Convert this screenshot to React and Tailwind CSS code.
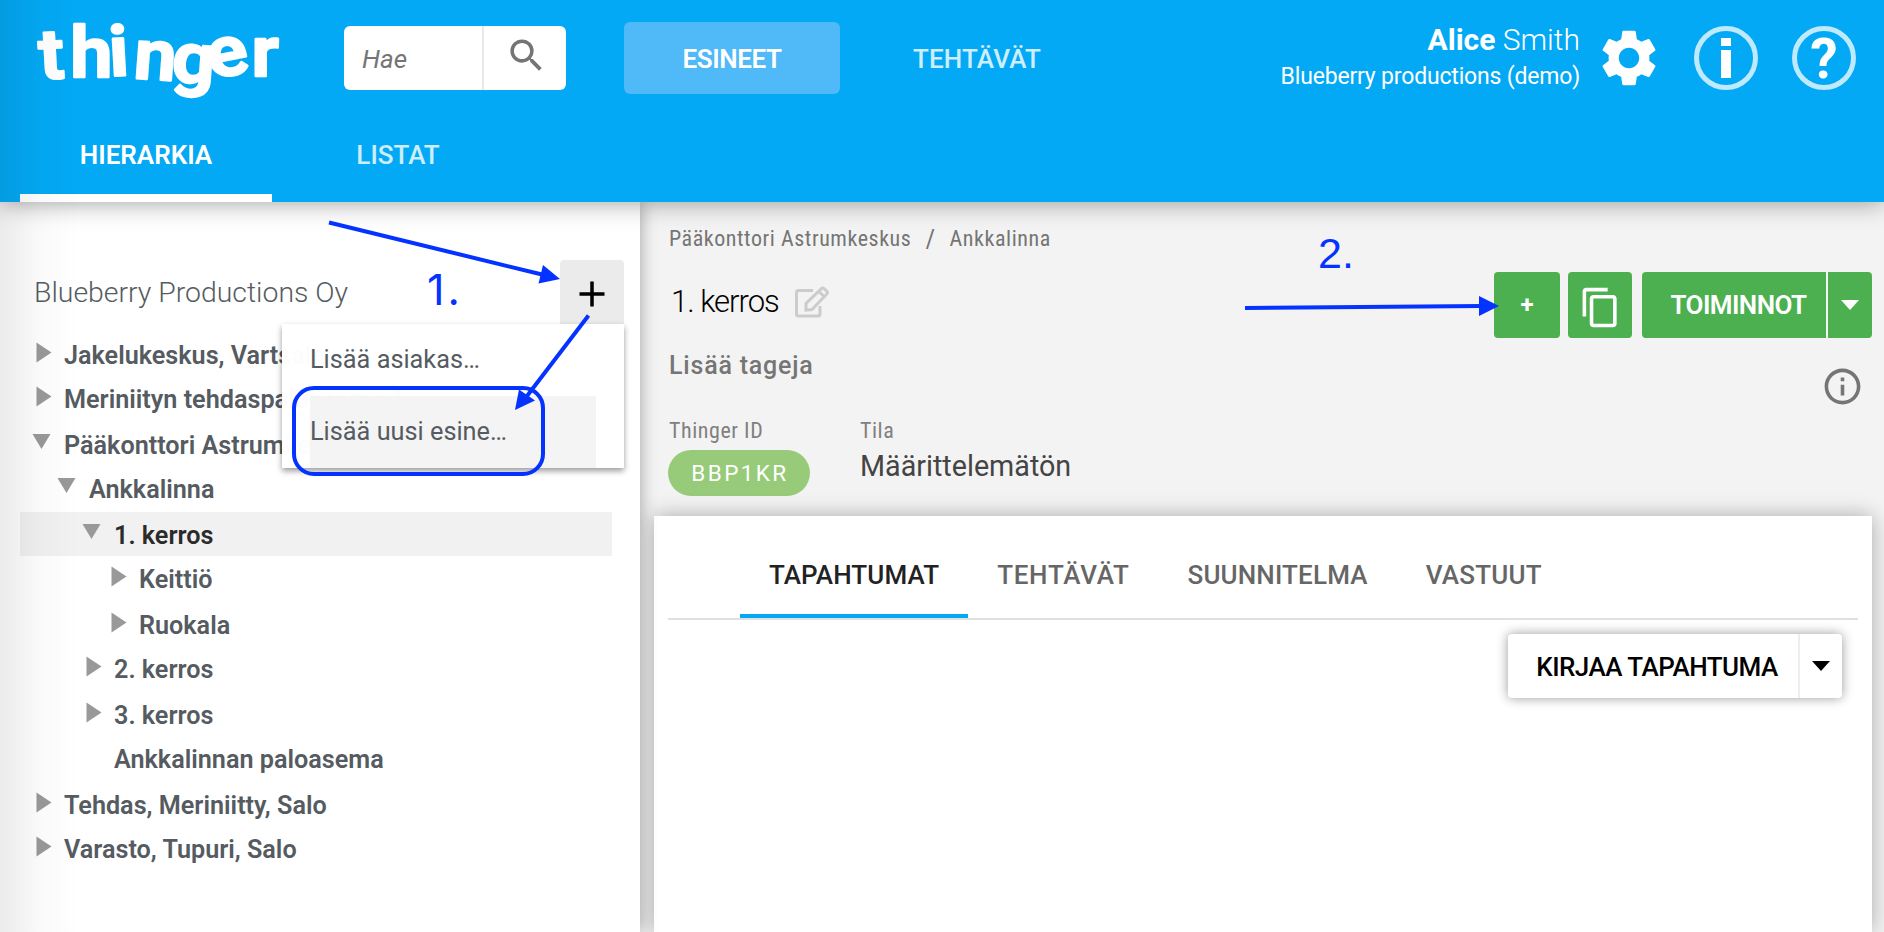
import React, { useState } from "react";
import { MdSearch, MdSettings, MdContentCopy, MdInfoOutline } from "react-icons/md";

const TREE = [
  { label: "Jakelukeskus, Vartsala", level: 0, state: "closed" },
  { label: "Meriniityn tehdaspaloasema 1", level: 0, state: "closed" },
  { label: "Pääkonttori Astrumkeskus", level: 0, state: "open" },
  { label: "Ankkalinna", level: 1, state: "open" },
  { label: "1. kerros", level: 2, state: "open" },
  { label: "Keittiö", level: 3, state: "closed" },
  { label: "Ruokala", level: 3, state: "closed" },
  { label: "2. kerros", level: 2, state: "closed" },
  { label: "3. kerros", level: 2, state: "closed" },
  { label: "Ankkalinnan paloasema", level: 2, state: "leaf" },
  { label: "Tehdas, Meriniitty, Salo", level: 0, state: "closed" },
  { label: "Varasto, Tupuri, Salo", level: 0, state: "closed" },
];

const INDENT = ["pl-[12px]", "pl-[37px]", "pl-[62px]", "pl-[87px]"];

const TABS = [
  { label: "TAPAHTUMAT", spacing: "tracking-[0.100px]" },
  { label: "TEHTÄVÄT", spacing: "tracking-[0.700px]" },
  { label: "SUUNNITELMA", spacing: "tracking-[0.150px]" },
  { label: "VASTUUT", spacing: "tracking-[0.250px]" },
];

function Logo() {
  return (
    <svg width="260" height="110" viewBox="30 0 260 110" className="block shrink-0">
      <text
        transform="scale(1.08 1)"
        x="37 65 102 123 158 196 233"
        y="79 77 76 78 81 79 76"
        rotate="-3 0 -3 4 4 -12 0"
        fontFamily="Roboto, sans-serif"
        fontWeight="600"
        fontSize="70"
        fill="#fff"
        stroke="#fff"
        strokeWidth="2.500"
        strokeLinejoin="round"
      >
        thinger
      </text>
    </svg>
  );
}

function Caret() {
  return (
    <svg width="18" height="10" viewBox="0 0 18 10">
      <path d="M0 0h18l-9 10z" fill="currentColor" />
    </svg>
  );
}

function TreeArrow({ state }) {
  if (state === "open") {
    return (
      <svg width="20" height="32" viewBox="0 0 20 32">
        <path d="M0.500 12h18l-9 15z" fill="#999" />
      </svg>
    );
  }
  if (state === "closed") {
    return (
      <svg width="20" height="32" viewBox="0 0 20 32">
        <path d="M4.500 10.500v20l15-10z" fill="#999" />
      </svg>
    );
  }
  return <span className="w-5" />;
}

function Header() {
  return (
    <header className="relative z-10 flex h-[202px] shrink-0 flex-col justify-between bg-[#03a9f4] text-white shadow-[0_0_24px_rgba(0,0,0,0.4)]">
      <div className="flex h-[110px] items-start">
        <div className="pl-[30px]">
          <Logo />
        </div>

        {/* Search */}
        <div className="ml-[54px] mt-[26px] flex h-16 w-[222px] overflow-hidden rounded-[6px] bg-white text-[#757575]">
          <div className="flex w-[140px] items-center border-r-2 border-[#e8e8e8] pl-[18px] pt-[2px] text-[26px] italic">
            Hae
          </div>
          <div className="flex flex-1 items-start justify-center pl-[2px] pt-2">
            <MdSearch size={43} />
          </div>
        </div>

        <nav className="ml-[58px] mt-[22px] flex text-[26px] font-medium">
          <div className="flex h-[72px] w-[216px] items-center justify-center rounded-[6px] bg-[#50b9f7] pt-[2px] font-semibold tracking-[-0.400px]">
            ESINEET
          </div>
          <div className="ml-[73px] flex items-center pt-[2px] tracking-[0.150px] text-white/80">TEHTÄVÄT</div>
        </nav>

        {/* User */}
        <div className="ml-auto mt-[20px] text-right">
          <div className="text-[30px] font-light leading-[40px]">
            <b className="font-bold">Alice</b> Smith
          </div>
          <div className="text-[23px] leading-[33px] tracking-[-0.180px]">Blueberry productions (demo)</div>
        </div>
        <MdSettings size={68} className="ml-[15px] mt-6 shrink-0" />
        <div className="ml-[31px] mt-[26px] flex size-16 items-center justify-center rounded-full border-[5px] border-white/75">
          <svg width="14" height="42" viewBox="0 0 14 42">
            <path d="M2 1h10v8H2zM2 13h10v28H2z" fill="#fff" />
          </svg>
        </div>
        <div className="ml-[34px] mr-7 mt-[26px] flex size-16 items-center justify-center rounded-full border-[5px] border-white/75 pt-[3px] text-[55px] font-bold leading-none">
          ?
        </div>
      </div>

      <div className="flex h-[92px] pl-5 text-[26px] font-medium">
        <div className="flex w-[252px] items-center justify-center border-b-8 border-white pt-[6px] font-semibold">
          HIERARKIA
        </div>
        <div className="flex w-[252px] items-center justify-center pb-[2px] text-white/80">LISTAT</div>
      </div>
    </header>
  );
}

function Sidebar() {
  const [selected, setSelected] = useState(4);

  return (
    <aside className="relative z-[5] w-[640px] shrink-0 bg-white pt-[58px] text-[#555b61] shadow-[0_0_16px_rgba(0,0,0,0.35)]">
      <div className="flex h-16 items-center justify-between pl-[34px] pr-4">
        <span className="pt-[2px] text-[28.400px] font-light">Blueberry Productions Oy</span>
        <button className="relative flex size-16 items-center justify-center rounded-t-[4px] bg-[#ebebeb]">
          <svg width="26" height="26" viewBox="0 0 26 26" className="-ml-px mt-1">
            <path d="M0.500 13h25M13 0.500v25" stroke="#000" strokeWidth="3.500" />
          </svg>
        </button>
      </div>

      {/* Hierarchy */}
      <ul className="ml-5 mt-2 w-[592px] text-[25.200px] font-semibold">
        {TREE.map((node, i) => (
          <li
            key={node.label}
            onClick={() => setSelected(i)}
            className={`flex h-[44px] items-start gap-[12px] even:h-[46px] ${INDENT[node.level]} ${
              i === selected ? "bg-[#f1f1f1] text-[#2b2b2b]" : ""
            }`}
          >
            <TreeArrow state={node.state} />
            <span className="whitespace-nowrap leading-[48px]">{node.label}</span>
          </li>
        ))}
      </ul>

      {/* Add menu */}
      <div className="absolute left-[282px] top-[122px] h-[144px] w-[342px] bg-white/98 pl-7 pr-7 text-[25.300px] shadow-[0_3px_6px_rgba(0,0,0,0.4)]">
        <div className="h-[72px] leading-[72px]">Lisää asiakas…</div>
        <div className="h-[72px] bg-[#f4f4f4] leading-[72px]">Lisää uusi esine…</div>
      </div>
    </aside>
  );
}

function Details() {
  return (
    <main className="flex flex-1 flex-col bg-[#f3f3f3] pl-[14px] pr-3">
      <section className="h-[314px] pl-[14px]">
        <div className="flex items-center pl-px pt-5 font-['Roboto_Condensed',Roboto,sans-serif] text-[22px] leading-[34px] tracking-[0.550px] text-[#757575] font-stretch-condensed">
          <span>Pääkonttori Astrumkeskus</span>
          <span className="mx-[14px] text-[26px]">/</span>
          <span>Ankkalinna</span>
        </div>

        <div className="flex pt-4">
          <div className="flex h-[60px] items-center pl-[3px]">
            <h1 className="text-[31px] font-light tracking-[-1px] text-black">1. kerros</h1>
            <svg width="36" height="32" viewBox="0 0 36 32" className="ml-[15px]" fill="none" stroke="#ccc" strokeWidth="3">
              <path d="M19 4.500H4.500a2 2 0 0 0-2 2v21.500a2 2 0 0 0 2 2H24a2 2 0 0 0 2-2v-8" />
              <path d="M12 24v-6.500L27.500 2.700a2 2 0 0 1 2.800 0l2.500 2.500a2 2 0 0 1 0 2.800L18 23.500zM25 5.500l5.200 5.200" />
            </svg>
          </div>
          <div className="ml-auto flex h-[66px] text-[26px] font-bold text-white">
            <button className="w-[66px] rounded-[4px] bg-[#4caf50] text-[24px]">+</button>
            <button className="ml-2 flex w-16 items-center justify-center rounded-[4px] bg-[#4caf50] pt-1">
              <MdContentCopy size={43} />
            </button>
            <button className="ml-[10px] w-[184px] rounded-l-[4px] bg-[#4caf50] pl-[9px] font-semibold tracking-[-0.600px]">
              TOIMINNOT
            </button>
            <button className="ml-[2px] flex w-[44px] items-center justify-center rounded-r-[4px] bg-[#4caf50]">
              <Caret />
            </button>
          </div>
        </div>

        <div className="flex h-[66px] items-start justify-between pr-2 text-[#757575]">
          <span className="pl-px pt-[12px] text-[25px] font-medium leading-[32px] tracking-[0.800px]">Lisää tageja</span>
          <MdInfoOutline size={43} className="mt-[27px]" />
        </div>

        <div className="flex gap-[50px] pt-[10px]">
          <div>
            <div className="pl-px pt-px font-['Roboto_Condensed',Roboto,sans-serif] text-[22px] leading-[32px] tracking-[0.550px] text-[#808080] font-stretch-condensed">
              Thinger ID
            </div>
            <div className="mt-[3px] flex h-[46px] w-[142px] items-center justify-center rounded-full bg-[#97cb7a] pl-[2px] pt-px text-[22.500px] tracking-[2.400px] text-white">
              BBP1KR
            </div>
          </div>
          <div>
            <div className="pt-px font-['Roboto_Condensed',Roboto,sans-serif] text-[22px] leading-[32px] tracking-[0.550px] text-[#808080] font-stretch-condensed">
              Tila
            </div>
            <div className="text-[28.700px] leading-[38px] text-[#444]">Määrittelemätön</div>
          </div>
        </div>
      </section>

      {/* Events card */}
      <section className="flex-1 bg-white px-[14px] shadow-[0_0_20px_rgba(0,0,0,0.3)]">
        <div className="flex h-[104px] border-b-2 border-[#e0e0e0] pl-[72px] text-[26px] font-medium text-[#666]">
          {TABS.map((tab, i) => (
            <div
              key={tab.label}
              className={`flex items-center border-b-4 px-[29px] pt-[20px] ${tab.spacing} ${
                i === 0 ? "border-[#03a9f4] text-[#222]" : "border-transparent"
              }`}
            >
              {tab.label}
            </div>
          ))}
        </div>
        <div className="mr-4 mt-[14px] flex justify-end">
          <div className="flex h-16 rounded-[4px] text-[26px] font-medium text-black shadow-[0_0_12px_rgba(0,0,0,0.4)]">
            <button className="w-[292px] border-r-2 border-[#eee] pl-[8px] pt-[2px] tracking-[-0.500px]">KIRJAA TAPAHTUMA</button>
            <button className="flex w-[42px] items-center justify-center">
              <Caret />
            </button>
          </div>
        </div>
      </section>
    </main>
  );
}

// Numbered guide arrows drawn on top of the page
function Guide() {
  return (
    <svg className="pointer-events-none absolute left-0 top-0 z-30" width="1884" height="932" viewBox="0 0 1884 932">
      <g fill="none" stroke="#0433ff" strokeWidth="4">
        <path d="M329 222.500L542 274.500" />
        <path d="M588.500 315.500L527 396" />
        <path d="M1245 308L1482 306" />
        <rect x="294" y="388" width="249" height="86" rx="20" />
      </g>
      <g fill="#0433ff">
        <path d="M560 279L538.500 283.500 543 265z" />
        <path d="M515 410L519 389.500 535 400.500z" />
        <path d="M1499 306L1479 316 1479 296z" />
      </g>
      <g fill="#0433ff" fontSize="43">
        <text x="427" y="305" fontFamily="Inter, sans-serif" letterSpacing="3">
          1.
        </text>
        <text x="1318" y="268" fontFamily="'Liberation Sans', sans-serif">
          2.
        </text>
      </g>
    </svg>
  );
}

export default function App() {
  return (
    <div className="relative flex h-[932px] w-[1884px] flex-col overflow-hidden font-[Roboto,sans-serif]">
      <Header />
      <div className="flex flex-1">
        <Sidebar />
        <Details />
      </div>
      {/* Edge shade */}
      <div className="pointer-events-none absolute left-0 top-0 z-20 h-full w-20 bg-linear-to-r from-black/8 via-black/2 to-transparent" />
      <Guide />
    </div>
  );
}
